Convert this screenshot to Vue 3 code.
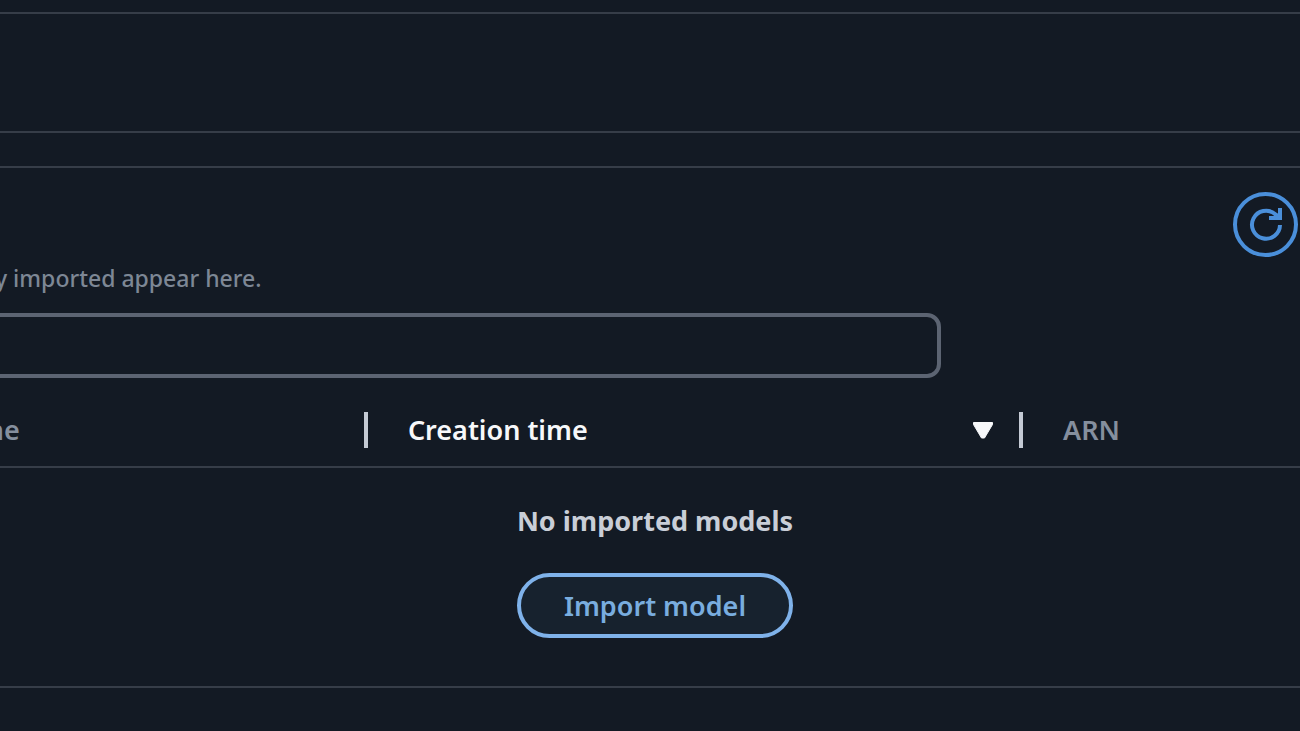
<script setup>
import { ref } from 'vue'

const query = ref('')
const columns = [
  { key: 'name', label: 'me', sortable: false },
  { key: 'time', label: 'Creation time', sortable: true },
  { key: 'arn', label: 'ARN', sortable: false }
]
</script>

<template>
  <main class="page">
    <section class="panel summary" aria-label="Summary"></section>

    <section class="panel models" aria-label="Imported models">
      <header class="toolbar">
        <button class="refresh" type="button" aria-label="Refresh">
          <svg viewBox="0 0 34 34" fill="none" stroke="currentColor" stroke-width="4">
            <path d="M31 17A14 14 0 1 1 26 6L29 9" />
            <path d="M31 0V10H20" />
            <path d="M25 9L30 4V9Z" fill="currentColor" stroke="none" />
          </svg>
        </button>
      </header>
      <p class="hint">y imported appear here.</p>
      <input v-model="query" class="search" type="text" aria-label="Find models" />

      <table class="grid">
        <thead>
          <tr>
            <th v-for="c in columns" :key="c.key" :class="c.key" scope="col">
              <button v-if="c.sortable" class="sort" type="button">
                {{ c.label }}
                <svg class="caret" viewBox="0 0 20 17" fill="currentColor" stroke="currentColor" stroke-width="1" stroke-linejoin="round">
                  <path d="M0.5 0.5H19.5V2.5L11.5 16H8.5L0.5 2.5Z" />
                </svg>
              </button>
              <div v-else class="label">{{ c.label }}</div>
            </th>
          </tr>
        </thead>
        <tbody>
          <tr>
            <td colspan="3">
              <div class="empty">
                <strong>No imported models</strong>
                <button class="import" type="button">Import model</button>
              </div>
            </td>
          </tr>
        </tbody>
      </table>
    </section>
  </main>
</template>

<style>
body {
  margin: 0;
  background: #131a24;
}
</style>

<style scoped>
.page {
  min-height: 100vh;
  box-sizing: border-box;
  padding-top: 12px;
  overflow: hidden;
  background: #131a24;
  color: #858f9e;
  font-family: "Noto Sans", "Open Sans", sans-serif;
}
.panel {
  border: solid #363d48;
  border-width: 2px 0;
}
.summary {
  height: 117px;
  margin-bottom: 33px;
}
.toolbar {
  display: flex;
  justify-content: flex-end;
  padding: 24px 2px 0 0;
}
.refresh {
  display: grid;
  place-items: center;
  width: 65px;
  height: 65px;
  padding: 0;
  border: 4px solid #4a8fda;
  border-radius: 50%;
  background: transparent;
  color: #4a8fda;
}
.refresh svg {
  width: 34px;
  height: 34px;
}
.hint {
  margin: 5px 0 19px -5px;
  font-size: 23px;
  font-weight: 500;
  line-height: 32px;
  color: #7d8795;
}
.search {
  display: block;
  width: calc(72% + 25px);
  height: 65px;
  box-sizing: border-box;
  margin-left: -20px;
  padding: 0 24px;
  border: 4px solid #5c6472;
  border-radius: 14px;
  background: transparent;
  color: #ffffff;
  font: inherit;
  font-size: 27px;
  outline: none;
}
.grid {
  width: 100%;
  margin-top: 34px;
  border-collapse: collapse;
  table-layout: fixed;
}
th {
  padding: 0 0 18px;
  border-bottom: 2px solid #363d48;
  text-align: left;
  font-size: 27px;
  font-weight: 600;
  line-height: 36px;
}
.name {
  width: 28.3%;
}
.time {
  width: 50.4%;
}
.label,
.sort {
  display: flex;
  align-items: center;
  justify-content: space-between;
  box-sizing: border-box;
  width: 100%;
  height: 36px;
  padding: 0 26px 0 40px;
  border: 0;
}
.name .label {
  padding-left: 0;
  text-indent: -22px;
}
.name .label,
.sort {
  border-right: 4px solid #c4cad4;
}
.sort {
  background: transparent;
  color: #f7f8fa;
  font: inherit;
}
.caret {
  width: 20px;
  height: 17px;
}
td {
  padding: 0;
}
.empty {
  display: flex;
  flex-direction: column;
  align-items: center;
  gap: 34px;
  padding: 35px 0 48px 10px;
}
.empty strong {
  font-size: 27px;
  font-weight: 700;
  line-height: 36px;
  color: #c9ced7;
}
.import {
  height: 65px;
  padding: 0 43px;
  border: 4px solid #7fb2ea;
  border-radius: 33px;
  background: #17222e;
  color: #79addf;
  font: inherit;
  font-size: 27px;
  font-weight: 600;
  line-height: 36px;
}
</style>
